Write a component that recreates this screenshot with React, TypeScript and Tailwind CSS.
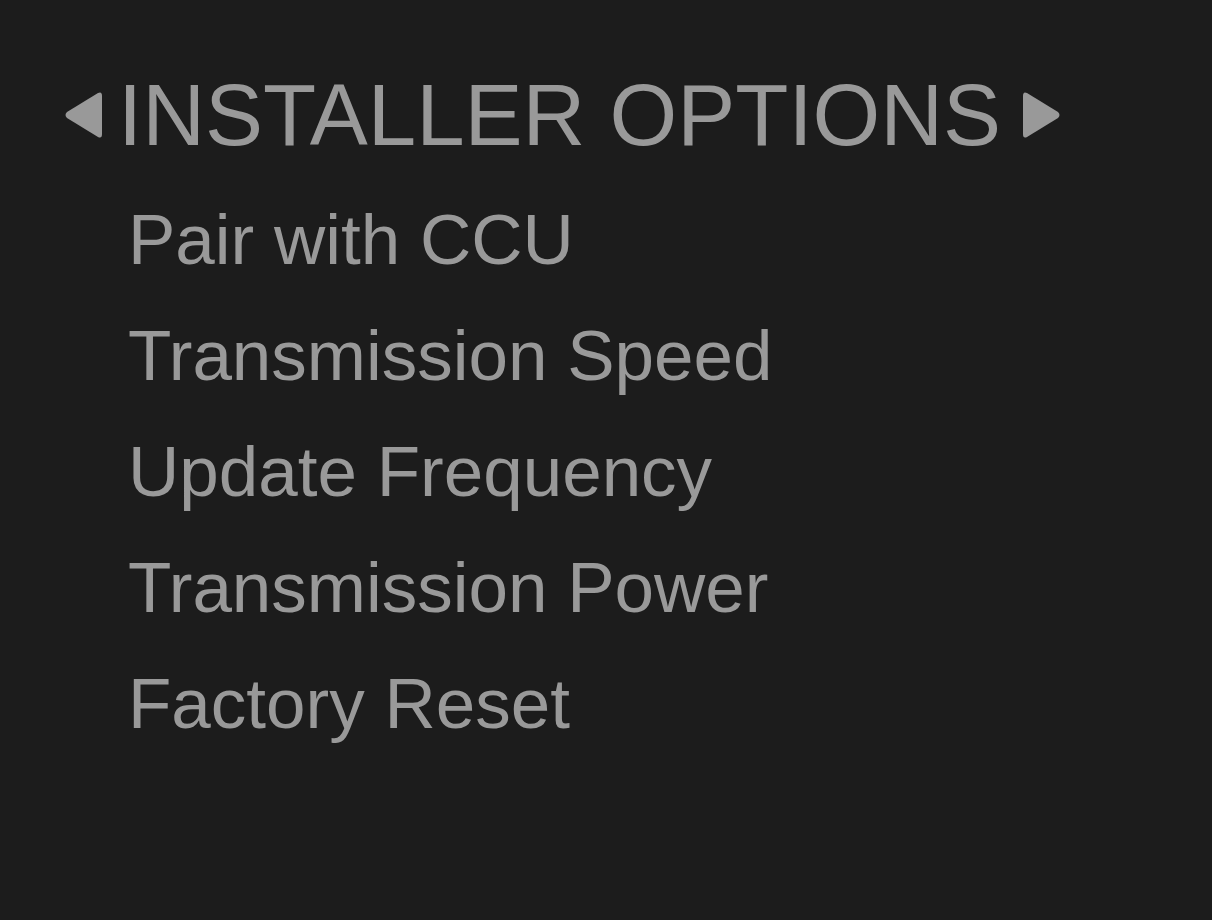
import React from "react";

const items = [
  "Pair with CCU",
  "Transmission Speed",
  "Update Frequency",
  "Transmission Power",
  "Factory Reset",
];

function Tri({ dir }: { dir: "left" | "right" }) {
  return (
    <svg width="38" height="48" viewBox="0 0 38 48" className="shrink-0">
      {dir === "left" ? (
        <path
          d="M34 2 Q38 0 38 5 L38 43 Q38 48 34 46 L3 27 Q0 24 3 21 Z"
          fill="#999999"
        />
      ) : (
        <path
          d="M4 2 Q0 0 0 5 L0 43 Q0 48 4 46 L35 27 Q38 24 35 21 Z"
          fill="#999999"
        />
      )}
    </svg>
  );
}

export default function App() {
  return (
    <div
      className="w-[1212px] h-[920px] bg-[#1c1c1c] text-[#999999] overflow-hidden"
      style={{ fontFamily: '"Liberation Sans", Arial, sans-serif' }}
    >
      <div className="pl-[64px] pt-[71px] flex flex-col">
        <div className="flex items-center">
          <Tri dir="left" />
          <span className="ml-[16px] mr-[22px] text-[87px] leading-none whitespace-nowrap">
            INSTALLER OPTIONS
          </span>
          <Tri dir="right" />
        </div>
        <div className="flex flex-col pl-[64px] mt-[24px]">
          {items.map((t) => (
            <div key={t} className="text-[71px] leading-[116px] whitespace-nowrap">
              {t}
            </div>
          ))}
        </div>
      </div>
    </div>
  );
}
